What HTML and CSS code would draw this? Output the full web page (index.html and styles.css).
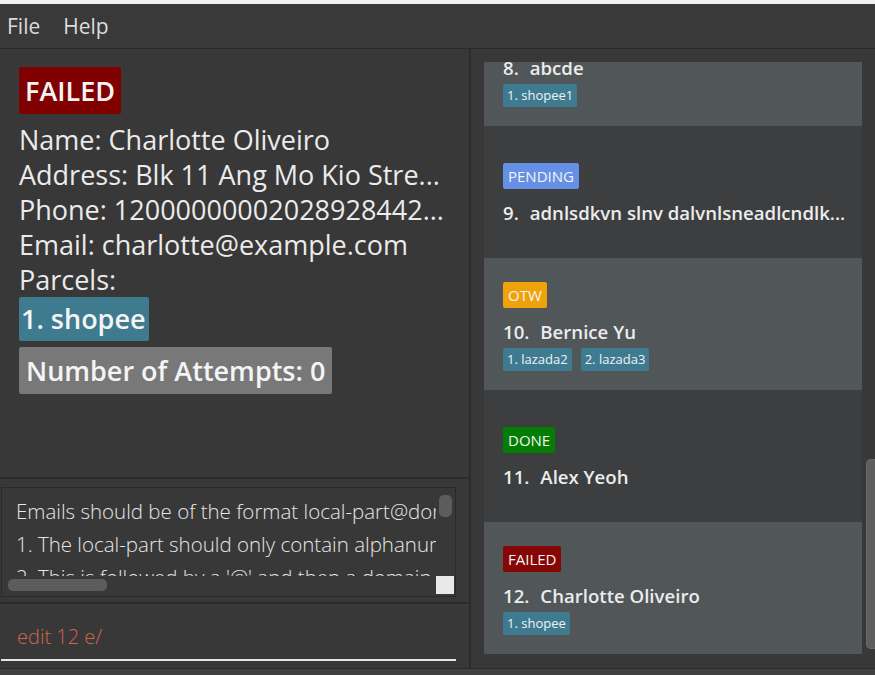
FILE: index.html
```html
<!DOCTYPE html>
<html lang="en">
<head>
<meta charset="utf-8">
<title>Parcel Book</title>
<link rel="stylesheet" href="styles.css">
</head>
<body>
<div class="titlestrip"></div>
<nav class="menubar">
  <span class="menu">File</span>
  <span class="menu">Help</span>
</nav>
<main class="main">
  <section class="left">
    <div class="detail">
      <span class="status failed big">FAILED</span>
      <div class="lines">
        <div class="line">Name: Charlotte Oliveiro</div>
        <div class="line">Address: Blk 11 Ang Mo Kio Stre...</div>
        <div class="line">Phone: 12000000002028928442...</div>
        <div class="line">Email: charlotte@example.com</div>
        <div class="line">Parcels:</div>
      </div>
      <span class="parcel-big">1. shopee</span>
      <span class="attempts">Number of Attempts: 0</span>
    </div>
    <div class="result-area">
      <div class="result-box">
        <div class="result-text">Emails should be of the format local-part@domain and adhere to the following constraints:
1. The local-part should only contain alphanumeric characters and these special characters, excluding the parentheses, (+_.-).
2. This is followed by a '@' and then a domain name. The domain name is made up of domain labels separated by periods.</div>
        <div class="vbar"><div class="vthumb"></div></div>
        <div class="hbar"><div class="hthumb"></div></div>
        <div class="corner"></div>
      </div>
    </div>
    <div class="command">
      <div class="cmd-field">edit 12 e/</div>
    </div>
  </section>
  <section class="right">
    <div class="list-viewport">
      <div class="list">
        <div class="card light">
          <span class="status done">DONE</span>
          <div class="name-row"><span class="idx">8.</span><span>abcde</span></div>
          <div class="chips"><span class="chip">1. shopee1</span></div>
        </div>
        <div class="card dark">
          <span class="status pending">PENDING</span>
          <div class="name-row"><span class="idx">9.</span><span>adnlsdkvn slnv dalvnlsneadlcndlk...</span></div>
        </div>
        <div class="card light">
          <span class="status otw">OTW</span>
          <div class="name-row"><span class="idx">10.</span><span>Bernice Yu</span></div>
          <div class="chips"><span class="chip">1. lazada2</span><span class="chip">2. lazada3</span></div>
        </div>
        <div class="card dark">
          <span class="status done">DONE</span>
          <div class="name-row"><span class="idx">11.</span><span>Alex Yeoh</span></div>
        </div>
        <div class="card light">
          <span class="status failed">FAILED</span>
          <div class="name-row"><span class="idx">12.</span><span>Charlotte Oliveiro</span></div>
          <div class="chips"><span class="chip">1. shopee</span></div>
        </div>
      </div>
    </div>
    <div class="scrollbar"><div class="thumb"></div></div>
  </section>
</main>
<div class="statusbar"></div>
</body>
</html>
```

FILE: styles.css
```css
* { box-sizing: border-box; }

html, body {
  margin: 0;
  padding: 0;
  width: 875px;
  height: 675px;
  overflow: hidden;
  background: #383838;
  font-family: "Open Sans", "Noto Sans", sans-serif;
  color: #ececec;
}

.titlestrip {
  height: 4px;
  background: #f0f0f0;
}

.menubar {
  height: 45px;
  background: #393939;
  border-bottom: 1px solid #2a2a2a;
  display: flex;
  align-items: center;
  padding-left: 7px;
  gap: 23px;
}

.menu {
  font-size: 21px;
  font-weight: 400;
  color: #dcdcdc;
  padding-bottom: 1px;
}

.main {
  display: flex;
  height: 619px;
}

.left {
  width: 471px;
  border-right: 2px solid #2b2b2b;
  display: flex;
  flex-direction: column;
}

.detail {
  height: 430px;
  border-bottom: 2px solid #2b2b2b;
  padding: 18px 0 0 19px;
  display: flex;
  flex-direction: column;
  align-items: flex-start;
}

.status {
  display: inline-block;
  color: #f4f4f4;
  border-radius: 2px;
  font-size: 15px;
  line-height: 26px;
  height: 26px;
  padding: 0 5px;
}

.status.big {
  font-size: 27px;
  font-weight: 600;
  line-height: 47px;
  height: 47px;
  padding: 0 6px;
}

.failed { background: #800000; }
.card .failed { background: #860606; }
.pending { background: #6590e6; }
.otw { background: #eea20b; }
.done { background: #047d04; }

.lines {
  margin-top: 8px;
  font-size: 27px;
  line-height: 35px;
  white-space: nowrap;
  color: #ebebeb;
}

.parcel-big {
  background: #3e7b8f;
  color: #f4f4f4;
  font-size: 27px;
  font-weight: 600;
  line-height: 44px;
  height: 44px;
  padding: 0 3px 0 2px;
  border-radius: 2px;
}

.attempts {
  margin-top: 6px;
  background: #787878;
  color: #f4f4f4;
  font-size: 27px;
  font-weight: 600;
  line-height: 47px;
  height: 47px;
  padding: 0 7px;
  border-radius: 2px;
}

.result-area {
  height: 125px;
  border-bottom: 2px solid #2b2b2b;
  padding: 8px 0 0 1px;
}

.result-box {
  width: 455px;
  height: 110px;
  border: 1px solid #2a2a2a;
  background: #383838;
  display: grid;
  grid-template-columns: 1fr 19px;
  grid-template-rows: 1fr 19px;
  padding: 0 0 1px 0;
}

.result-text {
  overflow: hidden;
  white-space: pre;
  font-size: 20.5px;
  font-weight: 300;
  line-height: 33px;
  padding: 7px 0 0 14px;
  color: #e6e6e6;
}

.vbar {
  padding: 7px 2px 0 3px;
}

.vthumb {
  width: 13px;
  height: 22px;
  border-radius: 5px;
  background: #5c5c5c;
}

.hbar {
  padding: 3px 0 0 6px;
}

.hthumb {
  width: 99px;
  height: 12px;
  border-radius: 5px;
  background: #5c5c5c;
}

.corner {
  background: #e9e9e9;
  margin: 0 1px 1px 0;
}

.command {
  flex: 1;
  padding-left: 1px;
}

.cmd-field {
  width: 455px;
  height: 57px;
  padding: 18px 0 0 16px;
  border-bottom: 2px solid #e6e6e6;
  font-size: 20px;
  font-weight: 300;
  line-height: 30px;
  color: #d06651;
}

.right {
  flex: 1;
  display: flex;
  padding: 13px 0 14px 13px;
}

.list-viewport {
  width: 378px;
  height: 592px;
  overflow: hidden;
}

.list {
  margin-top: -68px;
}

.card {
  height: 132px;
  padding: 5px 0 0 19px;
  display: flex;
  flex-direction: column;
  justify-content: center;
  align-items: flex-start;
}

.card.light { background: #515658; }
.card.dark { background: #3c3e3f; }

.name-row {
  margin-top: 10px;
  display: flex;
  gap: 11px;
  font-size: 18.6px;
  font-weight: 600;
  line-height: 28px;
  white-space: nowrap;
  color: #ececec;
}

.chips {
  margin-top: 2px;
  display: flex;
  gap: 9px;
}

.chip {
  background: #3e7b91;
  color: #f2f2f2;
  font-size: 13px;
  line-height: 23px;
  height: 23px;
  padding: 0 4px;
  border-radius: 2px;
}

.scrollbar {
  margin-left: 4px;
  width: 9px;
}

.thumb {
  margin-top: 397px;
  height: 190px;
  width: 10px;
  border-radius: 5px 0 0 5px;
  background: #5e5e5e;
  border: 1px solid #6a6a6a;
  border-right: none;
}

.statusbar {
  height: 7px;
  border-top: 1px solid #2b2b2b;
  background: #404040;
}
```
